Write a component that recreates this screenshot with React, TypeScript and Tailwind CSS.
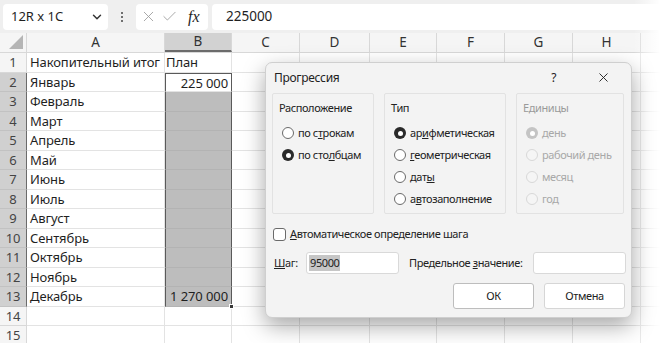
import { ChevronDown, X, Check } from 'lucide-react';

const cols = [
  { name: 'A', w: 'w-[138px]' },
  { name: 'B', w: 'w-[67px]' },
  { name: 'C', w: 'w-[68px]' },
  { name: 'D', w: 'w-[70px]' },
  { name: 'E', w: 'w-[67px]' },
  { name: 'F', w: 'w-[68px]' },
  { name: 'G', w: 'w-[68px]' },
  { name: 'H', w: 'w-[68px]' },
];

const months = [
  'Накопительный итог',
  'Январь',
  'Февраль',
  'Март',
  'Апрель',
  'Май',
  'Июнь',
  'Июль',
  'Август',
  'Сентябрь',
  'Октябрь',
  'Ноябрь',
  'Декабрь',
  '',
  '',
];

function Radio({ checked, disabled }: { checked?: boolean; disabled?: boolean }) {
  if (checked) {
    return (
      <span
        className={`w-[12px] h-[12px] rounded-full flex items-center justify-center shrink-0 ${
          disabled ? 'bg-[#c4c4c4]' : 'bg-[#2a2a2a]'
        }`}
      >
        <span className="w-[5px] h-[5px] rounded-full bg-white" />
      </span>
    );
  }
  return (
    <span
      className={`w-[12px] h-[12px] rounded-full border shrink-0 ${
        disabled ? 'border-[#d8d8d8] bg-[#f5f5f5]' : 'border-[#6a6a6a] bg-white'
      }`}
    />
  );
}

function Group({ title, w, disabled, children }: { title: string; w: string; disabled?: boolean; children: React.ReactNode }) {
  return (
    <div className={`${w} h-[121px] border border-[#e2e2e2] rounded-[2px] pt-[5px]`}>
      <div className={`pl-[6px] h-[18px] leading-[18px] ${disabled ? 'text-[#9a9a9a]' : 'text-[#222]'}`}>{title}</div>
      <div className="flex flex-col gap-[8px] pl-[9px] pt-[9px]">{children}</div>
    </div>
  );
}

function Opt({ children, checked, disabled }: { children: React.ReactNode; checked?: boolean; disabled?: boolean }) {
  return (
    <div className={`flex items-center gap-[4px] h-[14px] whitespace-nowrap ${disabled ? 'text-[#a8a8a8]' : 'text-[#222]'}`}>
      <Radio checked={checked} disabled={disabled} />
      <span>{children}</span>
    </div>
  );
}

export default function App() {
  return (
    <div
      className="w-[660px] h-[343px] relative overflow-hidden bg-white text-[#1f1f1f]"
      style={{ fontFamily: '"Noto Sans", "DejaVu Sans", sans-serif' }}
    >
      {/* formula bar */}
      <div className="h-[33px] bg-[#efefef] flex items-center pl-[3px] gap-[4px] text-[13px]">
        <div className="w-[105px] h-[26px] bg-white rounded-[4px] flex items-center justify-between pl-[8px] pr-[4px]">
          <span>12R x 1C</span>
          <ChevronDown size={14} strokeWidth={2.5} className="text-[#333]" />
        </div>
        <div className="w-[20px] flex flex-col items-center gap-[2px]">
          <span className="w-[2px] h-[2px] bg-[#444] rounded-full" />
          <span className="w-[2px] h-[2px] bg-[#444] rounded-full" />
          <span className="w-[2px] h-[2px] bg-[#444] rounded-full" />
        </div>
        <div className="w-[72px] h-[26px] bg-white rounded-[4px] flex items-center pl-[4px] gap-[4px]">
          <X size={17} strokeWidth={1.2} className="text-[#9a9a9a]" />
          <Check size={17} strokeWidth={1.2} className="text-[#9a9a9a]" />
          <span className="ml-[6px] italic text-[16px]" style={{ fontFamily: '"Liberation Serif", serif' }}>
            fx
          </span>
        </div>
        <div className="flex-1 h-[26px] bg-white rounded-l-[4px] flex items-center pl-[14px] text-[13.5px]">225000</div>
      </div>

      {/* column headers */}
      <div className="h-[20px] flex bg-[#f5f5f5] border-b border-[#d8d8d8] text-[13.5px] text-[#333]">
        <div className="w-[27px] shrink-0 relative border-r border-[#d8d8d8]">
          <svg className="absolute right-[3px] bottom-[3px]" width="14" height="14" viewBox="0 0 14 14">
            <path d="M14 0 L14 14 L0 14 Z" fill="#b5b5b5" />
          </svg>
        </div>
        {cols.map((c) => (
          <div
            key={c.name}
            className={`${c.w} shrink-0 flex items-center justify-center border-r border-[#d8d8d8] ${
              c.name === 'B' ? 'bg-[#d2d2d2] border-b-2 border-b-[#6b6b6b]' : ''
            }`}
          >
            {c.name}
          </div>
        ))}
        <div className="flex-1" />
      </div>

      {/* rows */}
      {months.map((m, i) => {
        const r = i + 1;
        const sel = r >= 2 && r <= 13;
        return (
          <div key={r} className="h-[19.5px] flex text-[13px] tracking-[-0.1px] leading-[19px]">
            <div
              className={`w-[27px] shrink-0 text-center border-r border-b text-[#444] ${
                sel ? 'bg-[#d0d0d0] border-r-[#6b6b6b] border-b-[#c2c2c2]' : 'bg-[#f5f5f5] border-[#d8d8d8]'
              }`}
            >
              {r}
            </div>
            <div className="w-[138px] shrink-0 border-r border-b border-[#e3e3e3] pl-[3px] whitespace-nowrap">{m}</div>
            <div
              className={`w-[67px] shrink-0 border-b text-right pr-[3px] whitespace-nowrap ${
                sel
                  ? `border-x border-x-[#5a5a5a] ${r === 2 ? 'bg-white border-t border-t-[#5a5a5a] border-b-[#e3e3e3]' : 'bg-[#bdbdbd] border-b-[#b3b3b3]'} ${
                      r === 13 ? 'border-b-[#5a5a5a]' : ''
                    }`
                  : 'border-r border-[#e3e3e3]'
              }`}
            >
              {r === 2 ? '225 000' : r === 13 ? '1 270 000' : r === 1 ? <span className="float-left pl-[1px]">План</span> : ''}
            </div>
            {cols.slice(2).map((c) => (
              <div key={c.name} className={`${c.w} shrink-0 border-r border-b border-[#e3e3e3]`} />
            ))}
            <div className="flex-1 border-b border-[#e3e3e3]" />
          </div>
        );
      })}

      {/* fill handle */}
      <div className="absolute left-[229px] top-[304px] w-[5px] h-[5px] bg-[#3a3a3a] border border-white" />

      {/* right fade */}
      <div className="absolute right-0 top-0 w-[26px] h-full bg-gradient-to-r from-transparent to-white" />

      {/* dialog */}
      <div
        className="absolute left-[265px] top-[62px] w-[367px] h-[256px] bg-[#f3f3f3] rounded-[7px] border border-[#cfcfcf] shadow-[0_8px_22px_rgba(0,0,0,0.35)] text-[11px] tracking-[-0.4px] text-[#222]"
      >
        <div className="h-[29px] flex items-center pl-[8px] pr-[20px]">
          <span className="flex-1 text-[12px] tracking-[-0.3px]">Прогрессия</span>
          <span className="mr-[40px] text-[12px]">?</span>
          <X size={15} strokeWidth={1.5} />
        </div>
        <div className="flex gap-[10px] pl-[6px] mt-[1px]">
          <Group title="Расположение" w="w-[102px]">
            <Opt>
              по с<u>т</u>рокам
            </Opt>
            <Opt checked>
              по сто<u>л</u>бцам
            </Opt>
          </Group>
          <Group title="Тип" w="w-[122px]">
            <Opt checked>
              ар<u>и</u>фметическая
            </Opt>
            <Opt>
              <u>г</u>еометрическая
            </Opt>
            <Opt>
              дат<u>ы</u>
            </Opt>
            <Opt>
              а<u>в</u>тозаполнение
            </Opt>
          </Group>
          <Group title="Единицы" w="w-[108px]" disabled>
            <Opt checked disabled>
              день
            </Opt>
            <Opt disabled>рабочий день</Opt>
            <Opt disabled>месяц</Opt>
            <Opt disabled>год</Opt>
          </Group>
        </div>
        <div className="flex items-center gap-[4px] pl-[7px] mt-[13px] h-[14px]">
          <span className="w-[13px] h-[13px] rounded-[3px] border border-[#6a6a6a] bg-white" />
          <span>
            <u>А</u>втоматическое определение шага
          </span>
        </div>
        <div className="flex items-center pl-[8px] mt-[11px] h-[22px]">
          <span className="w-[32px]">
            <u>Ш</u>аг:
          </span>
          <div className="w-[93px] h-[22px] bg-white border border-[#d9d9d9] rounded-[3px] flex items-center pl-[2px]">
            <span className="bg-[#c6c6c6] px-[1px] leading-[16px]">95000</span>
          </div>
          <span className="ml-[10px] w-[124px] whitespace-nowrap">
            Предельное <u>з</u>начение:
          </span>
          <div className="w-[93px] h-[22px] bg-white border border-[#d9d9d9] rounded-[3px]" />
        </div>
        <div className="flex justify-end gap-[10px] pr-[6px] mt-[9px]">
          <button className="w-[81px] h-[26px] bg-white border border-[#bdbdbd] rounded-[3px]">ОК</button>
          <button className="w-[81px] h-[26px] bg-white border border-[#d6d6d6] rounded-[3px]">Отмена</button>
        </div>
      </div>
    </div>
  );
}
